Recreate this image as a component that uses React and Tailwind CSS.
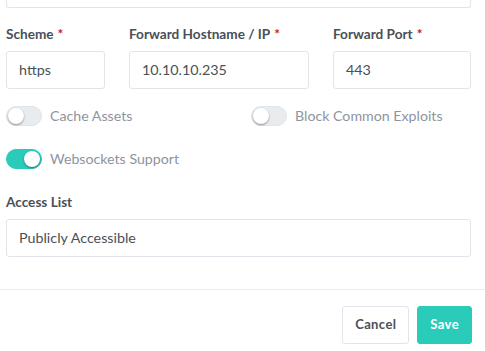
export default function App() {
  const font = { fontFamily: 'Lato, "Liberation Sans", sans-serif' };
  const Label = ({ children, req }) => (
    <label className="block text-[13.6px] leading-[21px] font-bold text-[#495057] mb-[6px]">
      {children}
      {req && <span className="text-[#cd201f] ml-[4px]">*</span>}
    </label>
  );
  const Input = ({ value }) => (
    <div className="h-[38px] border border-[#e0e5ec] rounded-[3px] px-[12px] flex items-center text-[14.3px] text-[#495057] bg-white">
      {value}
    </div>
  );
  const Toggle = ({ on, label }) => (
    <div className="flex items-center h-[24px]">
      <div
        className={
          on
            ? "relative w-[36px] h-[20px] rounded-full bg-[#2bcbba] border border-[#2bcbba]"
            : "relative w-[36px] h-[20px] rounded-full bg-[#e9ecef] border border-[#e0e5ec]"
        }
      >
        <div
          className={
            on
              ? "absolute top-[1px] left-[17px] w-[16px] h-[16px] rounded-full bg-white shadow-[0_1px_2px_0_rgba(0,0,0,0.4)]"
              : "absolute top-[1px] left-[1px] w-[16px] h-[16px] rounded-full bg-white shadow-[0_1px_2px_0_rgba(0,0,0,0.4)]"
          }
        />
      </div>
      <span className="ml-[8px] text-[14.2px] text-[#8e949e]">{label}</span>
    </div>
  );
  return (
    <div className="w-[485px] h-[351px] bg-white overflow-hidden" style={font}>
      <div className="px-[6px] w-[477px]">
        <div className="h-[8px] border-x border-b border-[#e0e5ec] rounded-b-[3px]" />
        <div className="mt-[16px] flex gap-[24px]">
          <div className="w-[99px]">
            <Label req>Scheme</Label>
            <Input value="https" />
          </div>
          <div className="w-[180px]">
            <Label req>Forward Hostname / IP</Label>
            <Input value="10.10.10.235" />
          </div>
          <div className="w-[138px]">
            <Label req>Forward Port</Label>
            <Input value="443" />
          </div>
        </div>
        <div className="mt-[15px] flex">
          <div className="w-[245px]">
            <Toggle label="Cache Assets" />
          </div>
          <Toggle label="Block Common Exploits" />
        </div>
        <div className="mt-[19px]">
          <Toggle on label="Websockets Support" />
        </div>
        <div className="mt-[21px]">
          <Label>Access List</Label>
          <Input value="Publicly Accessible" />
        </div>
      </div>
      <div className="mt-[32px] border-t border-[#e9ecef] pt-[16px] pr-[13px] flex justify-end gap-[8px]">
        <button className="h-[38px] px-[12px] border border-[#e0e5ec] rounded-[3px] bg-white text-[13px] font-bold tracking-[0.03em] text-[#495057]">
          Cancel
        </button>
        <button className="h-[38px] px-[12px] border border-[#2bcbba] rounded-[3px] bg-[#2bcbba] text-[13px] font-bold tracking-[0.03em] text-white">
          Save
        </button>
      </div>
    </div>
  );
}
